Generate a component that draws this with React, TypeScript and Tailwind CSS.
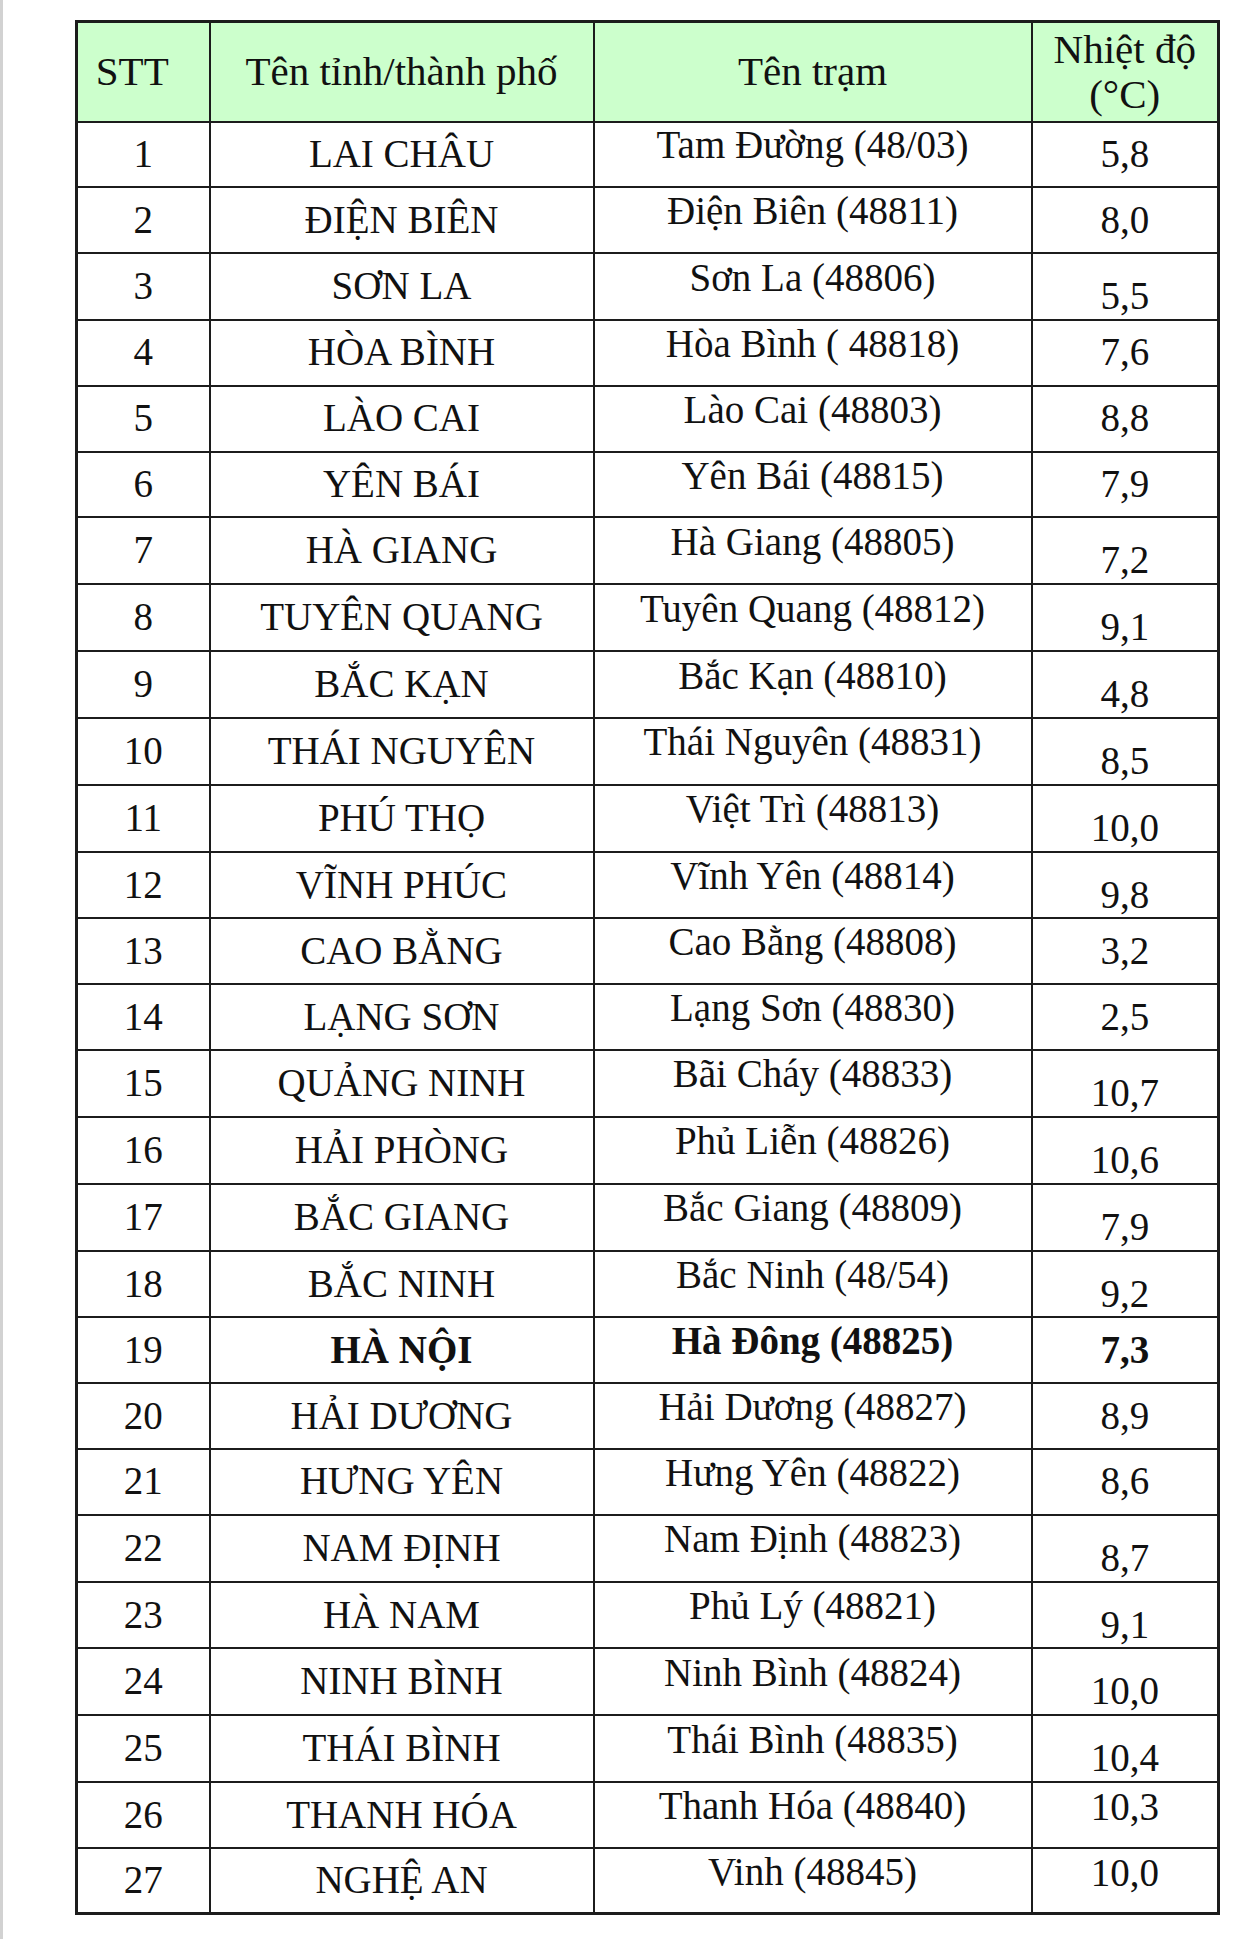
type Pos = "mid" | "low" | "high";

type Row = {
  stt: number;
  province: string;
  station: string;
  temp: string;
  pos: Pos;
  bold?: boolean;
};

const ROWS: Row[] = [
  { stt: 1, province: "LAI CHÂU", station: "Tam Đường (48/03)", temp: "5,8", pos: "mid" },
  { stt: 2, province: "ĐIỆN BIÊN", station: "Điện Biên (48811)", temp: "8,0", pos: "mid" },
  { stt: 3, province: "SƠN LA", station: "Sơn La (48806)", temp: "5,5", pos: "low" },
  { stt: 4, province: "HÒA BÌNH", station: "Hòa Bình ( 48818)", temp: "7,6", pos: "mid" },
  { stt: 5, province: "LÀO CAI", station: "Lào Cai (48803)", temp: "8,8", pos: "mid" },
  { stt: 6, province: "YÊN BÁI", station: "Yên Bái (48815)", temp: "7,9", pos: "mid" },
  { stt: 7, province: "HÀ GIANG", station: "Hà Giang (48805)", temp: "7,2", pos: "low" },
  { stt: 8, province: "TUYÊN QUANG", station: "Tuyên Quang (48812)", temp: "9,1", pos: "low" },
  { stt: 9, province: "BẮC KẠN", station: "Bắc Kạn (48810)", temp: "4,8", pos: "low" },
  { stt: 10, province: "THÁI NGUYÊN", station: "Thái Nguyên (48831)", temp: "8,5", pos: "low" },
  { stt: 11, province: "PHÚ THỌ", station: "Việt Trì (48813)", temp: "10,0", pos: "low" },
  { stt: 12, province: "VĨNH PHÚC", station: "Vĩnh Yên (48814)", temp: "9,8", pos: "low" },
  { stt: 13, province: "CAO BẰNG", station: "Cao Bằng (48808)", temp: "3,2", pos: "mid" },
  { stt: 14, province: "LẠNG SƠN", station: "Lạng Sơn (48830)", temp: "2,5", pos: "mid" },
  { stt: 15, province: "QUẢNG NINH", station: "Bãi Cháy (48833)", temp: "10,7", pos: "low" },
  { stt: 16, province: "HẢI PHÒNG", station: "Phủ Liễn (48826)", temp: "10,6", pos: "low" },
  { stt: 17, province: "BẮC GIANG", station: "Bắc Giang (48809)", temp: "7,9", pos: "low" },
  { stt: 18, province: "BẮC NINH", station: "Bắc Ninh (48/54)", temp: "9,2", pos: "low" },
  { stt: 19, province: "HÀ NỘI", station: "Hà Đông (48825)", temp: "7,3", pos: "mid", bold: true },
  { stt: 20, province: "HẢI DƯƠNG", station: "Hải Dương (48827)", temp: "8,9", pos: "mid" },
  { stt: 21, province: "HƯNG YÊN", station: "Hưng Yên (48822)", temp: "8,6", pos: "mid" },
  { stt: 22, province: "NAM ĐỊNH", station: "Nam Định (48823)", temp: "8,7", pos: "low" },
  { stt: 23, province: "HÀ NAM", station: "Phủ Lý (48821)", temp: "9,1", pos: "low" },
  { stt: 24, province: "NINH BÌNH", station: "Ninh Bình (48824)", temp: "10,0", pos: "low" },
  { stt: 25, province: "THÁI BÌNH", station: "Thái Bình (48835)", temp: "10,4", pos: "low" },
  { stt: 26, province: "THANH HÓA", station: "Thanh Hóa (48840)", temp: "10,3", pos: "high" },
  { stt: 27, province: "NGHỆ AN", station: "Vinh (48845)", temp: "10,0", pos: "high" },
];

const TEMP_PAD: Record<Pos, string> = {
  mid: "",
  low: "pt-[20px]",
  high: "pb-[15px]",
};

// Word-style table cells: Times-like serif, centred, dark rules
const cell =
  "border-2 border-[#1c1c1c] p-0 text-center align-middle font-['Liberation_Serif','Times_New_Roman',serif] text-[39px] leading-[1.15] text-[#111]";
const head = `${cell} font-normal text-[41px] leading-[45px]`;

export default function App() {
  return (
    <div className="min-h-[1939px] w-full border-l-[3px] border-[#d2d2d2] bg-white pt-[20px] pl-[72px] font-['Liberation_Serif','Times_New_Roman',serif]">
      <table className="w-[1142px] table-fixed border-collapse border-[3px] border-[#1c1c1c]">
        <colgroup>
          <col className="w-[133px]" />
          <col className="w-[384px]" />
          <col className="w-[438px]" />
          <col className="w-[187px]" />
        </colgroup>
        <thead>
          <tr className="h-[100px] bg-[#ccffcc]">
            <th className={`${head} pr-[22px]`}>STT</th>
            <th className={head}>Tên tỉnh/thành phố</th>
            <th className={head}>Tên trạm</th>
            <th className={head}>
              Nhiệt độ
              <br />
              (°C)
            </th>
          </tr>
        </thead>
        <tbody>
          {ROWS.map((r) => (
            <tr key={r.stt} className="h-[65.8px]">
              <td className={cell}>{r.stt}</td>
              <td className={r.bold ? `${cell} font-bold` : cell}>{r.province}</td>
              <td className={r.bold ? `${cell} pb-[17px] font-bold` : `${cell} pb-[17px]`}>
                {r.station}
              </td>
              <td className={r.bold ? `${cell} font-bold` : `${cell} ${TEMP_PAD[r.pos]}`}>
                {r.temp}
              </td>
            </tr>
          ))}
        </tbody>
      </table>
    </div>
  );
}
